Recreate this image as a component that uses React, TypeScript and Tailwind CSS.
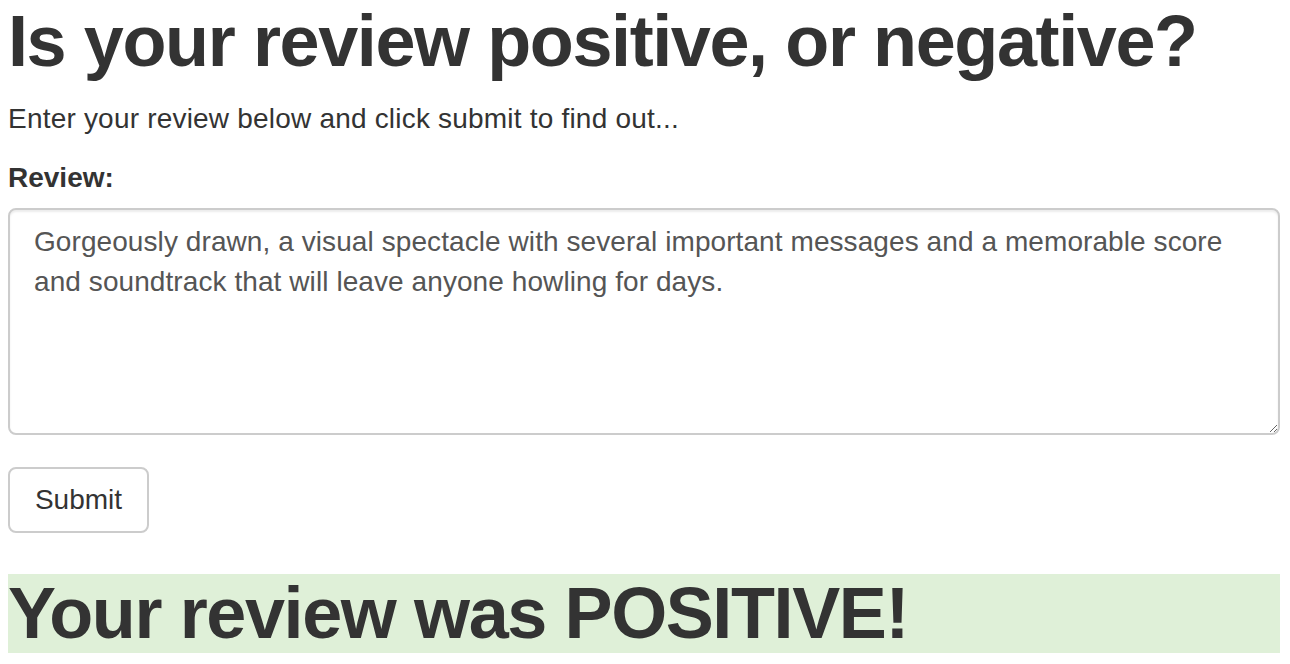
export default function App() {
  const review =
    'Gorgeously drawn, a visual spectacle with several important messages and a memorable score and soundtrack that will leave anyone howling for days.';

  return (
    <div className="min-h-[664px] bg-white px-2 font-['Liberation_Sans',Arial,sans-serif] text-[#333]">
      <h1 className="mt-[2px] text-[72px] font-bold leading-[79px] tracking-[-1.4px]">
        Is your review positive, or negative?
      </h1>
      <p className="mt-[18px] text-[28px] leading-[40px] tracking-[0.2px]">
        Enter your review below and click submit to find out...
      </p>

      <form className="mt-[19px]" onSubmit={(e) => e.preventDefault()}>
        <label htmlFor="review" className="block text-[28px] font-bold leading-[40px]">
          Review:
        </label>
        <textarea
          id="review"
          defaultValue={review}
          className="mt-[10px] block h-[227px] w-[1272px] rounded-lg border-2 border-[#ccc] px-6 py-3 text-[28px] leading-[40px] tracking-[0.08px] text-[#555] shadow-[inset_0_2px_2px_rgba(0,0,0,0.075)] outline-none"
        />
        <button
          type="submit"
          className="mt-[32px] block h-[66px] w-[141px] rounded-lg border-2 border-[#ccc] bg-white text-[28px] leading-[40px] text-[#333]"
        >
          Submit
        </button>
      </form>

      <h1 className="mt-[41px] w-[1272px] bg-[#dff0d8] text-[72px] font-bold leading-[79px] tracking-[-1.4px]">
        Your review was POSITIVE!
      </h1>
    </div>
  );
}
